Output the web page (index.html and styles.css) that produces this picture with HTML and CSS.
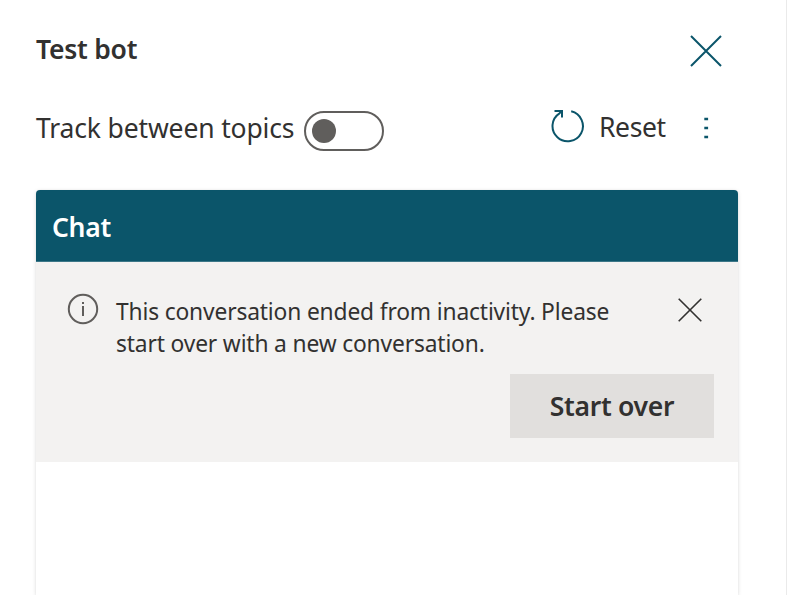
FILE: index.html
```html
<!DOCTYPE html>
<html lang="en">
<head>
<meta charset="utf-8">
<title>Test bot</title>
<link rel="stylesheet" href="styles.css">
</head>
<body>
<main class="panel">
  <header class="panel-header">
    <h1 class="title">Test bot</h1>
    <svg class="close" viewBox="0 0 32 32"><path d="M1 1L31 31M31 1L1 31"/></svg>
  </header>
  <div class="toolbar">
    <span class="track-label">Track between topics</span>
    <span class="toggle"><span class="knob"></span></span>
    <svg class="reset-icon" viewBox="0 0 34 34"><path d="M4.5 2H12V8.5"/><path d="M12 2L9.5 4.3A15.2 15.2 0 1 0 21.2 2.3"/></svg>
    <span class="reset-label">Reset</span>
    <svg class="more" viewBox="0 0 6 24"><path d="M1.3 4H5.1M1.3 13H5.1M1.3 22H5.1"/></svg>
  </div>
  <section class="chat">
    <h2 class="chat-header">Chat</h2>
    <div class="notice">
      <svg class="info" viewBox="0 0 32 32"><circle cx="16" cy="16" r="14.2"/><path d="M16 13V23M16 9V11"/></svg>
      <p class="message"><span class="line">This conversation ended from inactivity. Please</span><span class="line">start over with a new conversation.</span></p>
      <svg class="dismiss" viewBox="0 0 24 24"><path d="M.7 .7L23.3 23.3M23.3 .7L.7 23.3"/></svg>
      <button class="start">Start over</button>
    </div>
  </section>
</main>
</body>
</html>
```

FILE: styles.css
```css
* { box-sizing: border-box; }
body { margin: 0; background: #fff; color: #323130; font-family: "Noto Sans", "Open Sans", sans-serif; }
svg { display: block; fill: none; flex: none; }
.panel { width: 787px; height: 595px; padding: 0 48px 0 36px; border-right: 1px solid #eaeaea; overflow: hidden; display: flex; flex-direction: column; }
.panel-header { height: 100px; display: flex; justify-content: space-between; padding: 35px 16px 0 0; }
.title { margin: -1px 0 0; font-size: 26.5px; line-height: 30px; font-weight: 600; letter-spacing: -.25px; }
.close { width: 32px; height: 32px; stroke: #0b556a; stroke-width: 2; }
.toolbar { height: 90px; display: flex; align-items: flex-start; padding-top: 8px; }
.track-label { width: 268px; font-size: 26.5px; line-height: 40px; letter-spacing: -.15px; white-space: nowrap; }
.toggle { width: 80px; height: 40px; border: 2px solid #605e5c; border-radius: 20px; padding: 6px; margin-top: 3px; }
.knob { display: block; width: 24px; height: 24px; border-radius: 50%; background: #605e5c; }
.reset-icon { width: 34px; height: 34px; margin: 1px 15px 0 166px; stroke: #0b556a; stroke-width: 2; }
.reset-label { width: 104px; font-size: 26.5px; line-height: 39px; letter-spacing: -.4px; }
.more { width: 6px; height: 24px; margin-top: 7px; stroke: #0b556a; stroke-width: 2.6; }
.chat { flex: 1; border-radius: 4px 4px 0 0; box-shadow: 0 1px 4px rgba(0,0,0,.13), 0 0 1px rgba(0,0,0,.15); }
.chat-header { margin: 0; height: 72px; padding: 0 16px; background: #0b556a; color: #fff; border-bottom: 1px solid #3c7788; border-radius: 4px 4px 0 0; font-size: 26.5px; line-height: 74px; font-weight: 600; letter-spacing: -.3px; }
.notice { height: 200px; background: #f3f2f1; display: grid; grid-template-columns: 48px 1fr 24px; grid-template-rows: 80px 64px; padding: 32px 36px 0 32px; }
.info { width: 32px; height: 32px; margin: -1px 0 0 -1px; stroke: #605e5c; stroke-width: 2; }
.message { margin: 2px 0 0; font-size: 22.8px; line-height: 32px; letter-spacing: -.16px; white-space: nowrap; }
.line { display: block; }
.dismiss { width: 24px; height: 24px; margin-top: 4px; stroke: #323130; stroke-width: 1.6; }
.start { grid-column: 2 / 4; justify-self: end; width: 204px; height: 64px; margin-right: -12px; border: 0; background: #e1dfdd; color: #323130; font: 600 26.5px/64px "Noto Sans", sans-serif; letter-spacing: -.3px; padding: 0; }
```
